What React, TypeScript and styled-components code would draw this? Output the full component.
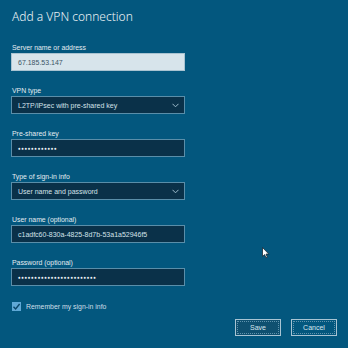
import React from "react";
import styled, { createGlobalStyle } from "styled-components";

const Global = createGlobalStyle`
  html, body {
    margin: 0;
    padding: 0;
    background: #03577e;
  }
  body {
    font-family: "Liberation Sans", "Noto Sans", sans-serif;
    color: #e8f0f4;
  }
`;

interface FieldDef {
  label: string;
  value: string;
  kind: "text" | "select" | "secret";
  light?: boolean;
}

const fields: FieldDef[] = [
  { label: "Server name or address", value: "67.185.53.147", kind: "text", light: true },
  { label: "VPN type", value: "L2TP/IPsec with pre-shared key", kind: "select" },
  { label: "Pre-shared key", value: "●●●●●●●●●●●●", kind: "secret" },
  { label: "Type of sign-in info", value: "User name and password", kind: "select" },
  { label: "User name (optional)", value: "c1adfc60-830a-4825-8d7b-53a1a52946f5", kind: "text" },
  { label: "Password (optional)", value: "●●●●●●●●●●●●●●●●●●●●●●●●", kind: "secret" },
];

export default function App() {
  return (
    <>
      <Global />
      <Dialog>
        <Title>Add a VPN connection</Title>
        <Fields>
          {fields.map((f) => (
            <Group key={f.label}>
              <Label>{f.label}</Label>
              <Box $light={f.light}>
                <Value $secret={f.kind === "secret"} $light={f.light}>
                  {f.value}
                </Value>
                {f.kind === "select" && <Chevron />}
              </Box>
            </Group>
          ))}
        </Fields>
        <CheckRow>
          <CheckBox>
            <svg width="9" height="9" viewBox="0 0 9 9">
              <path d="M1.5 4.8 L3.6 6.9 L7.6 2" stroke="#0a4668" strokeWidth="1.4" fill="none" />
            </svg>
          </CheckBox>
          <CheckLabel>Remember my sign-in info</CheckLabel>
        </CheckRow>
        <Buttons>
          <Button $primary>Save</Button>
          <Button>Cancel</Button>
        </Buttons>
        <Pointer />
      </Dialog>
    </>
  );
}

const Chevron = () => (
  <ChevronWrap>
    <svg width="7" height="5" viewBox="0 0 7 5">
      <path d="M0.5 0.8 L3.5 3.8 L6.5 0.8" stroke="#9dbccc" strokeWidth="1" fill="none" />
    </svg>
  </ChevronWrap>
);

const Pointer = () => (
  <PointerWrap>
    <svg width="8" height="12" viewBox="0 0 8 12">
      <path d="M0.5 0.5 L0.5 9.5 L2.6 7.6 L4 10.8 L5.3 10.2 L4 7.1 L6.8 7.1 Z" fill="#ffffff" stroke="#1b2a33" strokeWidth="0.8" />
    </svg>
  </PointerWrap>
);

const Dialog = styled.div`
  position: relative;
  width: 348px;
  height: 348px;
  box-sizing: border-box;
  padding: 8px 11px 0 11px;
  background: #03577e;
  overflow: hidden;
`;

const Title = styled.div`
  font-family: "Noto Sans", "Liberation Sans", sans-serif;
  font-size: 12px;
  font-weight: 300;
  line-height: 18px;
  color: #eef4f7;
  padding-left: 1px;
`;

const Fields = styled.div`
  display: flex;
  flex-direction: column;
  gap: 14px;
  margin-top: 16px;
`;

const Group = styled.div`
  display: flex;
  flex-direction: column;
`;

const Label = styled.div`
  font-size: 6.9px;
  line-height: 11px;
  padding-left: 1px;
  color: #e3ecf1;
`;

const Box = styled.div<{ $light?: boolean }>`
  width: 174px;
  height: 18px;
  box-sizing: border-box;
  display: flex;
  align-items: center;
  justify-content: space-between;
  padding: 0 6px;
  border: 1px solid ${(p) => (p.$light ? "#a9c3d1" : "#5a8ea9")};
  background: ${(p) => (p.$light ? "#d7e4eb" : "#0a3149")};
`;

const Value = styled.span<{ $secret?: boolean; $light?: boolean }>`
  font-size: ${(p) => (p.$secret ? "4.6px" : "7px")};
  letter-spacing: ${(p) => (p.$secret ? "0.5px" : "0")};
  color: ${(p) => (p.$light ? "#3b5566" : p.$secret ? "#eef4f7" : "#d3e2ea")};
  white-space: nowrap;
`;

const ChevronWrap = styled.span`
  display: flex;
  align-items: center;
  margin-right: -1px;
`;

const CheckRow = styled.div`
  display: flex;
  align-items: center;
  gap: 5px;
  margin-top: 16px;
  padding-left: 1px;
`;

const CheckBox = styled.div`
  width: 9px;
  height: 9px;
  background: #5fa8d6;
  display: flex;
  align-items: center;
  justify-content: center;
`;

const CheckLabel = styled.span`
  font-size: 6.9px;
  color: #cfdfe8;
`;

const Buttons = styled.div`
  display: flex;
  justify-content: flex-end;
  gap: 10px;
  margin-top: 8px;
`;

const Button = styled.div<{ $primary?: boolean }>`
  width: 46px;
  height: 17px;
  box-sizing: border-box;
  display: flex;
  align-items: center;
  justify-content: center;
  font-size: 7px;
  color: #d8e6ee;
  border: 1px solid #a8c4d3;
  outline: 1px dotted #5f93ad;
  outline-offset: -3px;
  background: ${(p) => (p.$primary ? "#0f5070" : "#03577e")};
`;

const PointerWrap = styled.div`
  position: absolute;
  left: 262px;
  top: 245px;
`;
